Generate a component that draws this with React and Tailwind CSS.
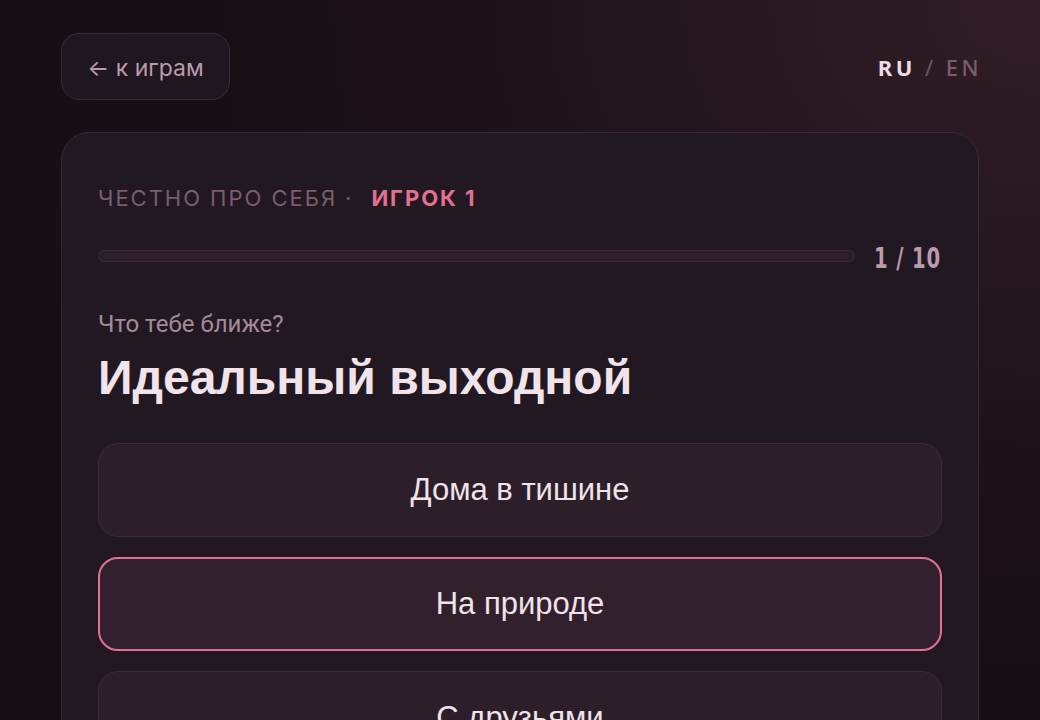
import React from 'react';

const options = [
    { label: 'Дома в тишине', active: false },
    { label: 'На природе', active: true },
    { label: 'С друзьями', active: false },
];

const App = () => {
    return (
        <div className="min-h-screen bg-[#170f14] bg-[radial-gradient(ellipse_at_top_right,#321e27_0%,#1b1117_42%,#160e13_72%)] font-['Inter',sans-serif]">
            <div className="max-w-[918px] mx-auto pt-[33px] pb-10">
                {/* Top bar */}
                <div className="flex items-center justify-between">
                    <button className="h-[67px] w-[169px] rounded-[18px] border border-[#3b2a36] bg-[#201620] text-[23px] text-[#b99bac] font-['Inter',sans-serif] flex items-center justify-center pt-[3px]">
                        ← к играм
                    </button>
                    <div className="text-[22px] tracking-[0.16em] font-['Noto_Sans',sans-serif] mr-[-3px] mt-[2px]">
                        <span className="font-bold text-[#eddce5]">RU</span>
                        <span className="text-[#6f5563] mx-[9px]">/</span>
                        <span className="text-[#7a5d6d] font-medium">EN</span>
                    </div>
                </div>

                {/* Question card */}
                <div className="mt-[32px] rounded-[28px] border border-[#3a2a35] bg-[#221821] px-[36px] pt-[54px] pb-10">
                    <div className="text-[22px] uppercase tracking-[0.09em] font-['Inter',sans-serif] flex items-center leading-none">
                        <span className="text-[#7b5d6d]">Честно про себя</span>
                        <span className="text-[#7b5d6d] ml-[8px]">·</span>
                        <span className="ml-[18px] font-bold text-[#e2718f]">Игрок 1</span>
                    </div>

                    <div className="mt-[33px] flex items-center">
                        <div className="flex-1 h-[12px] rounded-full border border-[#38283a] bg-[#2c1f29]"></div>
                        <div className="w-[68px] ml-[19px] shrink-0 leading-none">
                            <span className="inline-block text-[28px] font-semibold tracking-[0.04em] text-[#b99bac] font-['DejaVu_Sans_Condensed','Liberation_Sans_Narrow',sans-serif] scale-x-[0.78] translate-y-[3px] origin-left whitespace-nowrap">
                                1 / 10
                            </span>
                        </div>
                    </div>

                    <div className="mt-[42px] text-[24px] text-[#a68a99] font-['Roboto',sans-serif] leading-none">
                        Что тебе ближе?
                    </div>
                    <h1 className="mt-[18px] text-[48px] font-bold text-[#f1e3ea] font-['Liberation_Sans',sans-serif] leading-none">
                        Идеальный выходной
                    </h1>

                    <div className="mt-[41px] flex flex-col gap-[20px]">
                        {options.map((opt) => (
                            <button
                                key={opt.label}
                                className={
                                    opt.active
                                        ? 'h-[94px] rounded-[20px] border-2 border-[#e0728f] bg-[#33202d] text-[31px] text-[#f1e3ea] font-["Liberation_Sans",sans-serif]'
                                        : 'h-[94px] rounded-[20px] border border-[#3b2b37] bg-[#2d1f2a] text-[31px] text-[#f1e3ea] font-["Liberation_Sans",sans-serif]'
                                }
                            >
                                {opt.label}
                            </button>
                        ))}
                    </div>
                </div>
            </div>
        </div>
    );
};

export default App;
